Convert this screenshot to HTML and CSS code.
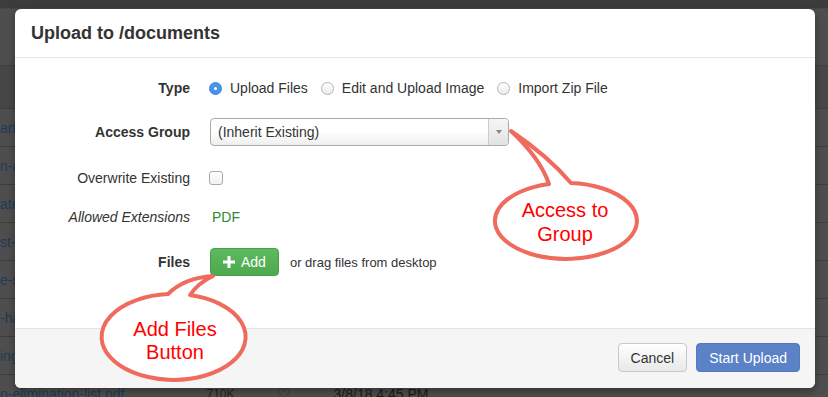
FILE: index.html
```html
<!DOCTYPE html>
<html lang="en">
<head>
    <meta charset="UTF-8" />
    <title>Upload to /documents</title>
    <link rel="stylesheet" href="styles.css">
</head>
<body>

<div class="backdrop">
    <div class="topbar"></div>
    <div class="toolbar"></div>
    <div class="thead"></div>
    <div class="file-row"><span class="fname">artment-plan.pdf</span></div>
    <div class="file-row"><span class="fname">n-agenda.pdf</span></div>
    <div class="file-row"><span class="fname">ate-report.pdf</span></div>
    <div class="file-row"><span class="fname">st-results.pdf</span></div>
    <div class="file-row"><span class="fname">e-schedule.pdf</span></div>
    <div class="file-row"><span class="fname">-handbook.pdf</span></div>
    <div class="file-row"><span class="fname">ing-minutes.pdf</span></div>
    <div class="file-row">
        <span class="fname">n-elimination-list.pdf</span>
        <span class="fsize">710K</span>
        <span class="fheart">&#9825;</span>
        <span class="fdate">3/8/18 4:45 PM</span>
    </div>
</div>

<div class="modal">
    <div class="modal-header">
        <h2 class="modal-title">Upload to /documents</h2>
    </div>

    <div class="modal-body">
        <div class="field">
            <label class="field-label bold">Type</label>
            <div class="radio-group">
                <span class="radio checked"></span><span class="radio-text">Upload Files</span>
                <span class="radio"></span><span class="radio-text">Edit and Upload Image</span>
                <span class="radio"></span><span class="radio-text">Import Zip File</span>
            </div>
        </div>

        <div class="field">
            <label class="field-label bold">Access Group</label>
            <div class="select">
                <span class="select-text">(Inherit Existing)</span>
                <span class="select-arrow"><span class="caret"></span></span>
            </div>
        </div>

        <div class="field field-check">
            <label class="field-label">Overwrite Existing</label>
            <span class="checkbox"></span>
        </div>

        <div class="field field-ext">
            <label class="field-label italic">Allowed Extensions</label>
            <span class="ext">PDF</span>
        </div>

        <div class="field field-files">
            <label class="field-label bold">Files</label>
            <div class="files">
                <button class="btn btn-add">
                    <svg width="12" height="12" viewBox="0 0 12 12"><rect x="4.5" y="0" width="3" height="12" fill="#fff"/><rect x="0" y="4.5" width="12" height="3" fill="#fff"/></svg>
                    Add
                </button>
                <span class="drag-hint">or drag files from desktop</span>
            </div>
        </div>
    </div>

    <div class="modal-footer">
        <button class="btn btn-default">Cancel</button>
        <button class="btn btn-primary">Start Upload</button>
    </div>
</div>

<!-- annotation bubbles -->
<svg class="callouts" width="828" height="397" viewBox="0 0 828 397">
    <path d="M549,184 A71,38 0 1,0 571,183 Q548,156 511,131 Q540,158 549,184 Z" fill="#fff" stroke="#ee6b5e" stroke-width="4" stroke-linejoin="round"/>
    <text x="565" y="217" class="callout-text">Access to</text>
    <text x="565" y="241" class="callout-text">Group</text>

    <path d="M168,294 A72,43 0 1,0 190,295 Q198,283 213,276 Q184,278 168,294 Z" fill="#fff" stroke="#ee6b5e" stroke-width="4" stroke-linejoin="round"/>
    <text x="175" y="336" class="callout-text">Add Files</text>
    <text x="175" y="359" class="callout-text">Button</text>
</svg>

</body>
</html>
```

FILE: styles.css
```css
* {
    box-sizing: border-box;
}

body, html {
    margin: 0;
    padding: 0;
    font-family: 'Liberation Sans', Arial, sans-serif;
    font-size: 14px;
    color: #333;
    background: #4e4e4e;
    width: 828px;
    height: 397px;
    overflow: hidden;
}

/* page behind the dialog */
.backdrop {
    width: 828px;
}

.topbar {
    height: 8px;
    background: #3c3c3c;
}

.toolbar {
    height: 58px;
    border-top: 1px solid #474747;
    border-bottom: 1px solid #404040;
}

.thead {
    height: 43px;
    background: #474747;
    border-bottom: 1px solid #3e3e3e;
}

.file-row {
    height: 38px;
    display: flex;
    align-items: center;
    border-bottom: 1px solid #3e3e3e;
    color: #1f3b59;
    white-space: nowrap;
}

.fsize {
    margin-left: 82px;
    font-size: 12px;
    color: #222;
}

.fheart {
    margin-left: 42px;
    color: #2a2a2a;
    font-size: 15px;
}

.fdate {
    margin-left: 44px;
    color: #1a1a1a;
}

/* dialog */
.modal {
    position: absolute;
    left: 15px;
    top: 9px;
    width: 800px;
    height: 379px;
    background: #fff;
    border-radius: 6px;
    box-shadow: 0 3px 9px rgba(0, 0, 0, 0.35);
    overflow: hidden;
    display: flex;
    flex-direction: column;
}

.modal-header {
    height: 49px;
    padding: 0 16px;
    border-bottom: 1px solid #e5e5e5;
}

.modal-title {
    margin: 0;
    font-size: 18px;
    line-height: 48px;
    font-weight: bold;
    color: #333;
}

.modal-body {
    height: 270px;
    padding: 8px 0 0 15px;
}

.field {
    display: grid;
    grid-template-columns: 160px 1fr;
    column-gap: 19px;
    align-items: center;
    height: 44px;
}

.field-check {
    height: 48px;
}

.field-ext {
    height: 30px;
}

.field-files {
    height: 60px;
}

.field-label {
    text-align: right;
    color: #333;
}

.bold {
    font-weight: bold;
}

.italic {
    font-style: italic;
}

.radio-group {
    display: flex;
    align-items: center;
}

.radio {
    width: 13px;
    height: 13px;
    border-radius: 50%;
    border: 1px solid #b3b3b3;
    background: linear-gradient(#fff, #ececec);
    margin-left: 13px;
    position: relative;
}

.radio:first-child {
    margin-left: 0;
}

.radio.checked {
    background: #4a93e8;
    border-color: #3d86dc;
}

.radio.checked::after {
    content: "";
    position: absolute;
    left: 4px;
    top: 4px;
    width: 3px;
    height: 3px;
    border-radius: 50%;
    background: #fff;
}

.radio-text {
    margin-left: 8px;
}

.select {
    width: 299px;
    height: 28px;
    display: flex;
    border: 1px solid #aaa;
    border-radius: 4px;
    background: linear-gradient(#fff 50%, #eee);
    margin-left: 1px;
}

.select-text {
    flex: 1;
    line-height: 26px;
    padding-left: 7px;
    color: #333;
}

.select-arrow {
    width: 20px;
    border-left: 1px solid #ccc;
    background: linear-gradient(#f6f6f6, #e2e2e2);
    border-radius: 0 3px 3px 0;
    display: flex;
    align-items: center;
    justify-content: center;
}

.caret {
    width: 0;
    height: 0;
    border-left: 3px solid transparent;
    border-right: 3px solid transparent;
    border-top: 4px solid #888;
}

.checkbox {
    width: 14px;
    height: 14px;
    border: 1px solid #a9a9a9;
    border-radius: 3px;
    background: linear-gradient(#fff, #f1f1f1);
}

.ext {
    color: #2f8a2f;
    padding-left: 3px;
}

.files {
    display: flex;
    align-items: center;
}

.btn {
    font-family: inherit;
    font-size: 14px;
    height: 29px;
    padding: 0 12px;
    border-radius: 4px;
    border: 1px solid #ccc;
    cursor: pointer;
}

.btn-add {
    display: flex;
    align-items: center;
    gap: 6px;
    height: 28px;
    margin-left: 1px;
    color: #fff;
    background: linear-gradient(#5fba5f, #4ca94c);
    border-color: #46a046;
}

.drag-hint {
    margin-left: 11px;
    font-size: 13px;
    color: #333;
}

.modal-footer {
    height: 60px;
    border-top: 1px solid #e3e3e3;
    background: #f5f5f5;
    display: flex;
    justify-content: flex-end;
    align-items: flex-start;
    gap: 9px;
    padding: 14px 15px 0 0;
}

.btn-default {
    color: #333;
    background: linear-gradient(#fff, #e8e8e8);
    border-color: #c8c8c8;
}

.btn-primary {
    color: #fff;
    background: #5b81c7;
    border-color: #5479be;
}

/* annotations on top */
.callouts {
    position: absolute;
    left: 0;
    top: 0;
    pointer-events: none;
}

.callout-text {
    font-family: 'Liberation Sans', Arial, sans-serif;
    font-size: 20px;
    fill: #ff0000;
    text-anchor: middle;
}
```
